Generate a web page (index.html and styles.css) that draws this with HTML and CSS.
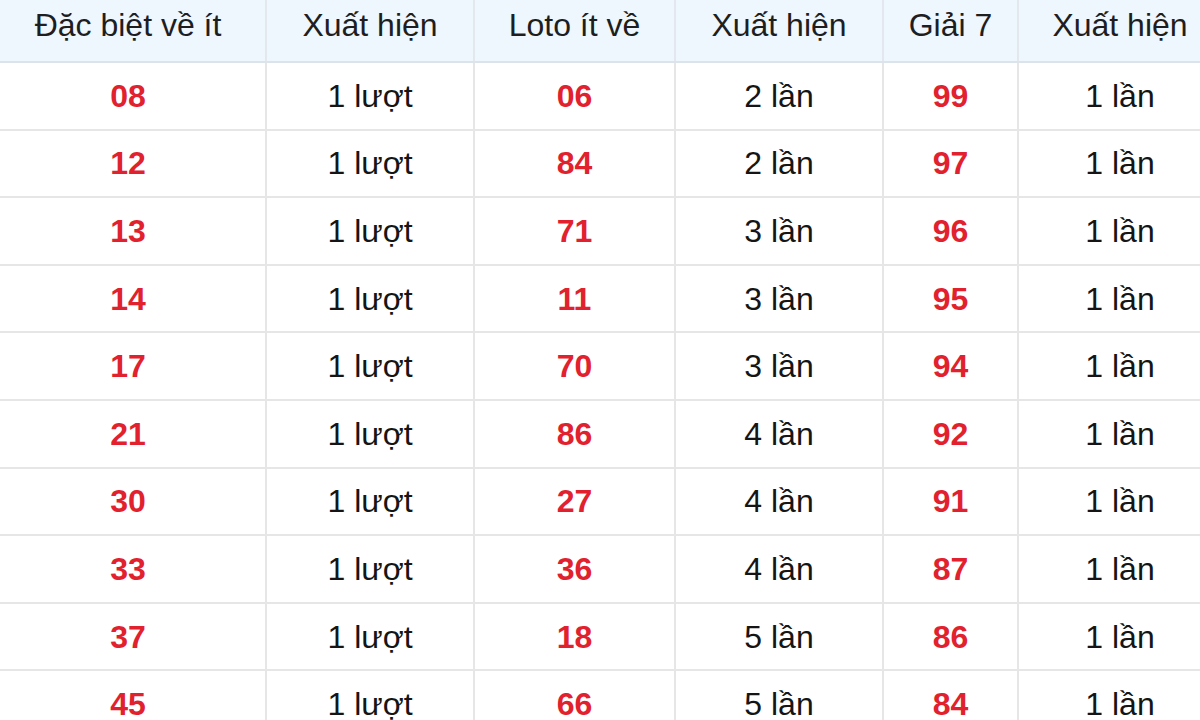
FILE: index.html
```html
<!DOCTYPE html>
<html lang="vi">
<head>
<meta charset="utf-8">
<title>Thống kê lô ít về</title>
<link rel="stylesheet" href="styles.css">
</head>
<body>
<table class="stats">
  <colgroup>
    <col class="c1"><col class="c2"><col class="c3"><col class="c4"><col class="c5"><col class="c6">
  </colgroup>
  <thead>
    <tr>
      <th>Đặc biệt về ít</th>
      <th>Xuất hiện</th>
      <th>Loto ít về</th>
      <th>Xuất hiện</th>
      <th>Giải 7</th>
      <th>Xuất hiện</th>
    </tr>
  </thead>
  <tbody>
    <tr><td class="num">08</td><td>1 lượt</td><td class="num">06</td><td>2 lần</td><td class="num">99</td><td>1 lần</td></tr>
    <tr><td class="num">12</td><td>1 lượt</td><td class="num">84</td><td>2 lần</td><td class="num">97</td><td>1 lần</td></tr>
    <tr><td class="num">13</td><td>1 lượt</td><td class="num">71</td><td>3 lần</td><td class="num">96</td><td>1 lần</td></tr>
    <tr><td class="num">14</td><td>1 lượt</td><td class="num">11</td><td>3 lần</td><td class="num">95</td><td>1 lần</td></tr>
    <tr><td class="num">17</td><td>1 lượt</td><td class="num">70</td><td>3 lần</td><td class="num">94</td><td>1 lần</td></tr>
    <tr><td class="num">21</td><td>1 lượt</td><td class="num">86</td><td>4 lần</td><td class="num">92</td><td>1 lần</td></tr>
    <tr><td class="num">30</td><td>1 lượt</td><td class="num">27</td><td>4 lần</td><td class="num">91</td><td>1 lần</td></tr>
    <tr><td class="num">33</td><td>1 lượt</td><td class="num">36</td><td>4 lần</td><td class="num">87</td><td>1 lần</td></tr>
    <tr><td class="num">37</td><td>1 lượt</td><td class="num">18</td><td>5 lần</td><td class="num">86</td><td>1 lần</td></tr>
    <tr><td class="num">45</td><td>1 lượt</td><td class="num">66</td><td>5 lần</td><td class="num">84</td><td>1 lần</td></tr>
  </tbody>
</table>
</body>
</html>
```
FILE: styles.css
```css
html, body {
  margin: 0;
  padding: 0;
  background: #ffffff;
  overflow: hidden;
}

.stats {
  margin-left: -11px;
  width: 1232px;
  border-collapse: collapse;
  table-layout: fixed;
  font-family: "Liberation Sans", Arial, sans-serif;
  font-size: 32px;
  color: #151515;
}

.c1 { width: 276px; }
.c2 { width: 208px; }
.c3 { width: 201px; }
.c4 { width: 208px; }
.c5 { width: 135px; }
.c6 { width: 204px; }

.stats th {
  height: 62px;
  padding: 0 0 11px 0;
  box-sizing: border-box;
  background: #eef6fe;
  font-weight: normal;
  color: #1e1e1e;
  text-align: center;
  border-left: 2px solid #e3e8ee;
  border-right: 2px solid #e3e8ee;
  border-bottom: 2px solid #dde3ea;
  line-height: 36px;
}

.stats td {
  height: 65.6px;
  padding: 0;
  text-align: center;
  vertical-align: middle;
  border: 2px solid #e6e6e6;
  line-height: 36px;
}

.stats td.num {
  color: #e1222e;
  font-weight: bold;
}
```
